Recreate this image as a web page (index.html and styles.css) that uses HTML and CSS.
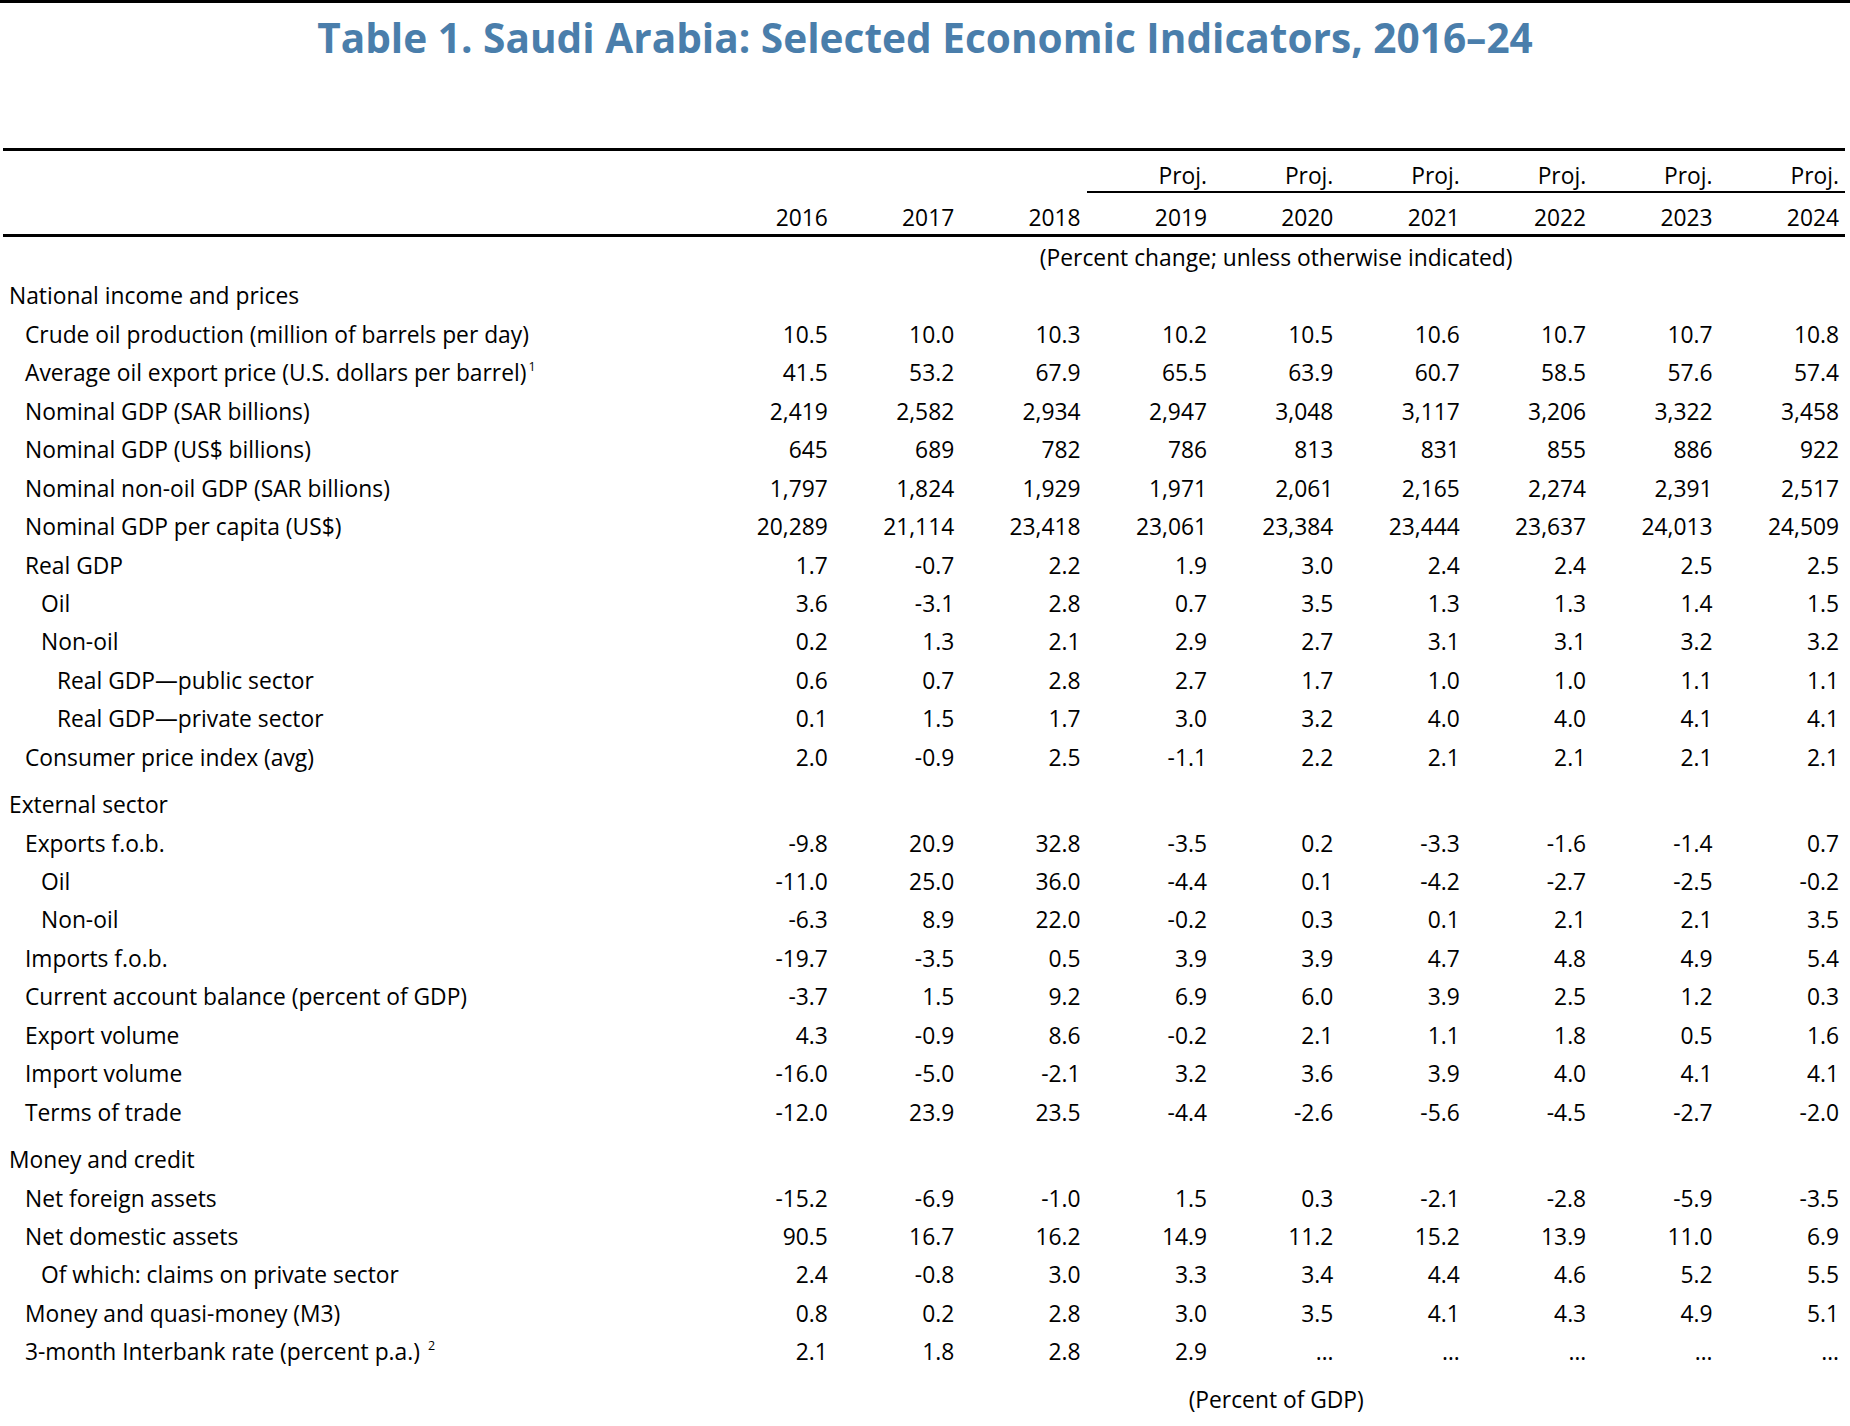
FILE: index.html
```html
<!DOCTYPE html>
<html lang="en">
<head>
<meta charset="utf-8">
<title>Table 1. Saudi Arabia: Selected Economic Indicators, 2016–24</title>
<link rel="stylesheet" href="styles.css">
</head>
<body>
<div class="page">
  <header class="head">
    <h1 class="title">Table 1. Saudi Arabia: Selected Economic Indicators, 2016–24</h1>
  </header>
  <table class="ind">
    <colgroup>
      <col class="c-lab">
      <col class="c-num"><col class="c-num"><col class="c-num"><col class="c-num"><col class="c-num"><col class="c-num"><col class="c-num"><col class="c-num"><col class="c-num">
    </colgroup>
    <thead>
      <tr class="r-proj">
        <th></th><th></th><th></th><th></th>
        <th class="p">Proj.</th><th class="p">Proj.</th><th class="p">Proj.</th><th class="p">Proj.</th><th class="p">Proj.</th><th class="p">Proj.</th>
      </tr>
      <tr class="r-year">
        <th></th><th>2016</th><th>2017</th><th>2018</th><th>2019</th><th>2020</th><th>2021</th><th>2022</th><th>2023</th><th>2024</th>
      </tr>
    </thead>
    <tbody>
      <tr class="unit"><td></td><td colspan="9">(Percent change; unless otherwise indicated)</td></tr>
      <tr class="sec first"><td class="l0">National income and prices</td><td colspan="9"></td></tr>
      <tr><td class="l1">Crude oil production (million of barrels per day)</td><td>10.5</td><td>10.0</td><td>10.3</td><td>10.2</td><td>10.5</td><td>10.6</td><td>10.7</td><td>10.7</td><td>10.8</td></tr>
      <tr><td class="l1">Average oil export price (U.S. dollars per barrel)<span class="sup">1</span></td><td>41.5</td><td>53.2</td><td>67.9</td><td>65.5</td><td>63.9</td><td>60.7</td><td>58.5</td><td>57.6</td><td>57.4</td></tr>
      <tr><td class="l1">Nominal GDP (SAR billions)</td><td>2,419</td><td>2,582</td><td>2,934</td><td>2,947</td><td>3,048</td><td>3,117</td><td>3,206</td><td>3,322</td><td>3,458</td></tr>
      <tr><td class="l1">Nominal GDP (US$ billions)</td><td>645</td><td>689</td><td>782</td><td>786</td><td>813</td><td>831</td><td>855</td><td>886</td><td>922</td></tr>
      <tr><td class="l1">Nominal non-oil GDP (SAR billions)</td><td>1,797</td><td>1,824</td><td>1,929</td><td>1,971</td><td>2,061</td><td>2,165</td><td>2,274</td><td>2,391</td><td>2,517</td></tr>
      <tr><td class="l1">Nominal GDP per capita (US$)</td><td>20,289</td><td>21,114</td><td>23,418</td><td>23,061</td><td>23,384</td><td>23,444</td><td>23,637</td><td>24,013</td><td>24,509</td></tr>
      <tr><td class="l1">Real GDP</td><td>1.7</td><td>-0.7</td><td>2.2</td><td>1.9</td><td>3.0</td><td>2.4</td><td>2.4</td><td>2.5</td><td>2.5</td></tr>
      <tr><td class="l2">Oil</td><td>3.6</td><td>-3.1</td><td>2.8</td><td>0.7</td><td>3.5</td><td>1.3</td><td>1.3</td><td>1.4</td><td>1.5</td></tr>
      <tr><td class="l2">Non-oil</td><td>0.2</td><td>1.3</td><td>2.1</td><td>2.9</td><td>2.7</td><td>3.1</td><td>3.1</td><td>3.2</td><td>3.2</td></tr>
      <tr><td class="l3">Real GDP—public sector</td><td>0.6</td><td>0.7</td><td>2.8</td><td>2.7</td><td>1.7</td><td>1.0</td><td>1.0</td><td>1.1</td><td>1.1</td></tr>
      <tr><td class="l3">Real GDP—private sector</td><td>0.1</td><td>1.5</td><td>1.7</td><td>3.0</td><td>3.2</td><td>4.0</td><td>4.0</td><td>4.1</td><td>4.1</td></tr>
      <tr><td class="l1">Consumer price index (avg)</td><td>2.0</td><td>-0.9</td><td>2.5</td><td>-1.1</td><td>2.2</td><td>2.1</td><td>2.1</td><td>2.1</td><td>2.1</td></tr>
      <tr class="sec"><td class="l0">External sector</td><td colspan="9"></td></tr>
      <tr><td class="l1">Exports f.o.b.</td><td>-9.8</td><td>20.9</td><td>32.8</td><td>-3.5</td><td>0.2</td><td>-3.3</td><td>-1.6</td><td>-1.4</td><td>0.7</td></tr>
      <tr><td class="l2">Oil</td><td>-11.0</td><td>25.0</td><td>36.0</td><td>-4.4</td><td>0.1</td><td>-4.2</td><td>-2.7</td><td>-2.5</td><td>-0.2</td></tr>
      <tr><td class="l2">Non-oil</td><td>-6.3</td><td>8.9</td><td>22.0</td><td>-0.2</td><td>0.3</td><td>0.1</td><td>2.1</td><td>2.1</td><td>3.5</td></tr>
      <tr><td class="l1">Imports f.o.b.</td><td>-19.7</td><td>-3.5</td><td>0.5</td><td>3.9</td><td>3.9</td><td>4.7</td><td>4.8</td><td>4.9</td><td>5.4</td></tr>
      <tr><td class="l1">Current account balance (percent of GDP)</td><td>-3.7</td><td>1.5</td><td>9.2</td><td>6.9</td><td>6.0</td><td>3.9</td><td>2.5</td><td>1.2</td><td>0.3</td></tr>
      <tr><td class="l1">Export volume</td><td>4.3</td><td>-0.9</td><td>8.6</td><td>-0.2</td><td>2.1</td><td>1.1</td><td>1.8</td><td>0.5</td><td>1.6</td></tr>
      <tr><td class="l1">Import volume</td><td>-16.0</td><td>-5.0</td><td>-2.1</td><td>3.2</td><td>3.6</td><td>3.9</td><td>4.0</td><td>4.1</td><td>4.1</td></tr>
      <tr><td class="l1">Terms of trade</td><td>-12.0</td><td>23.9</td><td>23.5</td><td>-4.4</td><td>-2.6</td><td>-5.6</td><td>-4.5</td><td>-2.7</td><td>-2.0</td></tr>
      <tr class="sec"><td class="l0">Money and credit</td><td colspan="9"></td></tr>
      <tr><td class="l1">Net foreign assets</td><td>-15.2</td><td>-6.9</td><td>-1.0</td><td>1.5</td><td>0.3</td><td>-2.1</td><td>-2.8</td><td>-5.9</td><td>-3.5</td></tr>
      <tr><td class="l1">Net domestic assets</td><td>90.5</td><td>16.7</td><td>16.2</td><td>14.9</td><td>11.2</td><td>15.2</td><td>13.9</td><td>11.0</td><td>6.9</td></tr>
      <tr><td class="l2">Of which: claims on private sector</td><td>2.4</td><td>-0.8</td><td>3.0</td><td>3.3</td><td>3.4</td><td>4.4</td><td>4.6</td><td>5.2</td><td>5.5</td></tr>
      <tr><td class="l1">Money and quasi-money (M3)</td><td>0.8</td><td>0.2</td><td>2.8</td><td>3.0</td><td>3.5</td><td>4.1</td><td>4.3</td><td>4.9</td><td>5.1</td></tr>
      <tr><td class="l1">3-month Interbank rate (percent p.a.) <span class="sup">2</span></td><td>2.1</td><td>1.8</td><td>2.8</td><td>2.9</td><td class="na">…</td><td class="na">…</td><td class="na">…</td><td class="na">…</td><td class="na">…</td></tr>
      <tr class="unit sec"><td></td><td colspan="9">(Percent of GDP)</td></tr>
    </tbody>
  </table>
</div>
</body>
</html>
```

FILE: styles.css
```css
html, body {
  margin: 0;
  padding: 0;
  background: #ffffff;
}

body {
  font-family: "Open Sans", "Noto Sans", "DejaVu Sans", sans-serif;
  color: #000000;
  overflow: hidden;
}

.page {
  width: 1850px;
  height: 1426px;
  border-top: 3px solid #000000;
  box-sizing: border-box;
  overflow: hidden;
}

.head {
  height: 145px;
  display: flex;
  justify-content: center;
  align-items: flex-start;
}

.title {
  margin: 7px 0 0 0;
  font-size: 40.6px;
  line-height: 56px;
  font-weight: 700;
  color: #4a7eab;
  letter-spacing: 0;
  white-space: nowrap;
}

.ind {
  margin-left: 3px;
  width: 1842px;
  table-layout: fixed;
  border-collapse: separate;
  border-spacing: 0;
  font-size: 22.8px;
}

.c-lab { width: 704.4px; }
.c-num { width: 126.4px; }

.ind th,
.ind td {
  padding: 0;
  vertical-align: top;
  font-weight: 400;
  white-space: nowrap;
}

.ind th {
  text-align: right;
  padding-right: 6px;
}

.r-proj th {
  border-top: 3px solid #000000;
  padding-top: 10px;
  line-height: 30px;
}

.r-proj th.p {
  border-bottom: 2px solid #000000;
}

.r-year th {
  padding-top: 8px;
  line-height: 33px;
  border-bottom: 3px solid #000000;
}

.ind tbody td {
  padding-top: 4px;
  line-height: 34.44px;
  text-align: right;
  padding-right: 6px;
}

.ind tbody td.l0,
.ind tbody td.l1,
.ind tbody td.l2,
.ind tbody td.l3 {
  text-align: left;
  padding-right: 0;
}

.l0 { padding-left: 6px !important; }
.l1 { padding-left: 22px !important; }
.l2 { padding-left: 38px !important; }
.l3 { padding-left: 54px !important; }

.ind tbody tr.unit td {
  text-align: center;
  padding-right: 0;
}

.ind tbody tr.sec td {
  padding-top: 13px;
}

.ind tbody tr.sec.first td {
  padding-top: 4px;
}

.sup {
  font-size: 12.5px;
  line-height: 0;
  vertical-align: 10px;
  margin-left: 2px;
}

.na {
  letter-spacing: 0;
}
```
